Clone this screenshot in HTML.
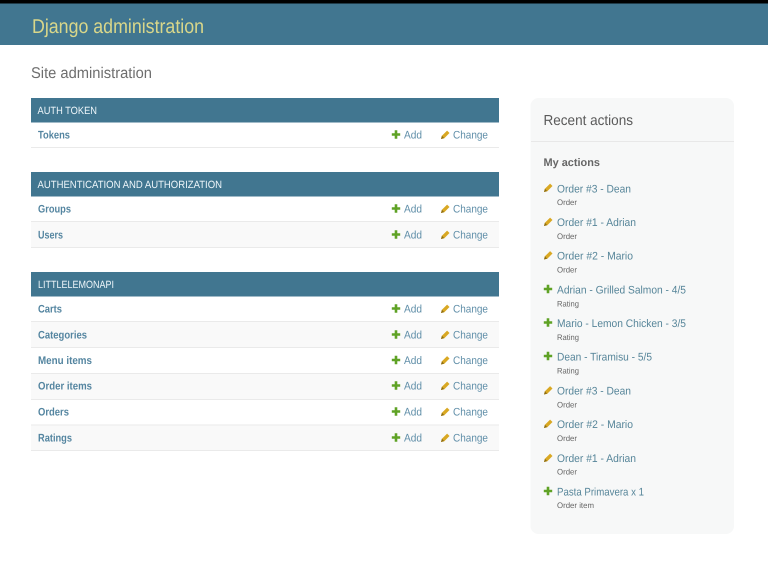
<!DOCTYPE html>
<html lang="en">
<head>
<meta charset="utf-8">
<title>Site administration | Django site admin</title>
<style>
html,body{margin:0;padding:0;background:#fff;width:768px;height:588px;overflow:hidden}
svg{display:block}
text{font-family:"Liberation Sans",Arial,sans-serif;text-rendering:geometricPrecision}
.cap{font-size:10.5px;fill:#eef6fa}
.m{font-size:11px;font-weight:bold;fill:#5485a0;transform:translateY(-.5px)}
.a{font-size:11px;fill:#5f8ea8;transform:translateY(-.5px)}
.t{font-size:11px;fill:#568599;transform:translateY(-.5px)}
.s{font-size:8px;fill:#666}
.p{fill:#5fa225}
.e{fill:#d9a823}
.l{fill:#8c6c12}
</style>
</head>
<body>
<svg width="768" height="588" viewBox="0 0 768 588" xmlns="http://www.w3.org/2000/svg">
<rect width="768" height="588" fill="#fff"/>
<rect width="768" height="45" fill="#417690"/>
<rect width="768" height="3.5" fill="#000"/>
<text x="32" y="33" font-size="20" fill="#d9d78a" textLength="172" lengthAdjust="spacingAndGlyphs">Django administration</text>
<text x="31" y="78" font-size="15.5" fill="#6e6e6e" textLength="121" lengthAdjust="spacingAndGlyphs">Site administration</text>

<!-- Auth token -->
<rect x="31" y="98" width="468" height="24.5" fill="#417690"/>
<text class="cap" x="37.5" y="114" textLength="59.5" lengthAdjust="spacingAndGlyphs">AUTH TOKEN</text>
<rect x="31" y="147" width="468" height="1" fill="#eaeaea"/>
<text class="m" x="38" y="139" textLength="32" lengthAdjust="spacingAndGlyphs">Tokens</text>
<path class="p" transform="translate(396 134.5)" d="M-1.3-4.2h2.6v2.9h2.9v2.6h-2.9v2.9h-2.6v-2.9h-2.9v-2.6h2.9z"/><text class="a" x="404" y="139" textLength="18" lengthAdjust="spacingAndGlyphs">Add</text>
<g transform="translate(445.5 134.5)"><path class="e" d="M-4.5 4.5l.9-3.2 5.2-5.2 2.4 2.4-5.2 5.2z"/><path class="l" d="M-4.5 4.5l.9-3.2 2.3 2.3z"/></g><text class="a" x="453" y="139" textLength="35" lengthAdjust="spacingAndGlyphs">Change</text>

<!-- Authentication and authorization -->
<rect x="31" y="172" width="468" height="24.5" fill="#417690"/>
<text class="cap" x="37.5" y="188" textLength="184.5" lengthAdjust="spacingAndGlyphs">AUTHENTICATION AND AUTHORIZATION</text>
<rect x="31" y="222" width="468" height="25" fill="#f9f9f9"/>
<rect x="31" y="221" width="468" height="1" fill="#eaeaea"/>
<rect x="31" y="247" width="468" height="1" fill="#eaeaea"/>
<text class="m" x="38" y="213" textLength="33" lengthAdjust="spacingAndGlyphs">Groups</text>
<path class="p" transform="translate(396 208.5)" d="M-1.3-4.2h2.6v2.9h2.9v2.6h-2.9v2.9h-2.6v-2.9h-2.9v-2.6h2.9z"/><text class="a" x="404" y="213" textLength="18" lengthAdjust="spacingAndGlyphs">Add</text>
<g transform="translate(445.5 208.5)"><path class="e" d="M-4.5 4.5l.9-3.2 5.2-5.2 2.4 2.4-5.2 5.2z"/><path class="l" d="M-4.5 4.5l.9-3.2 2.3 2.3z"/></g><text class="a" x="453" y="213" textLength="35" lengthAdjust="spacingAndGlyphs">Change</text>
<text class="m" x="38" y="239" textLength="25" lengthAdjust="spacingAndGlyphs">Users</text>
<path class="p" transform="translate(396 234.5)" d="M-1.3-4.2h2.6v2.9h2.9v2.6h-2.9v2.9h-2.6v-2.9h-2.9v-2.6h2.9z"/><text class="a" x="404" y="239" textLength="18" lengthAdjust="spacingAndGlyphs">Add</text>
<g transform="translate(445.5 234.5)"><path class="e" d="M-4.5 4.5l.9-3.2 5.2-5.2 2.4 2.4-5.2 5.2z"/><path class="l" d="M-4.5 4.5l.9-3.2 2.3 2.3z"/></g><text class="a" x="453" y="239" textLength="35" lengthAdjust="spacingAndGlyphs">Change</text>

<!-- Littlelemonapi -->
<rect x="31" y="272" width="468" height="24.5" fill="#417690"/>
<text class="cap" x="38" y="288" textLength="76" lengthAdjust="spacingAndGlyphs">LITTLELEMONAPI</text>
<rect x="31" y="322" width="468" height="25" fill="#f9f9f9"/>
<rect x="31" y="374" width="468" height="25" fill="#f9f9f9"/>
<rect x="31" y="425" width="468" height="25" fill="#f9f9f9"/>
<rect x="31" y="321" width="468" height="1" fill="#eaeaea"/>
<rect x="31" y="347" width="468" height="1" fill="#eaeaea"/>
<rect x="31" y="373" width="468" height="1" fill="#eaeaea"/>
<rect x="31" y="399" width="468" height="1" fill="#eaeaea"/>
<rect x="31" y="424.5" width="468" height="1" fill="#eaeaea"/>
<rect x="31" y="450" width="468" height="1" fill="#eaeaea"/>

<text class="m" x="38" y="313" textLength="24" lengthAdjust="spacingAndGlyphs">Carts</text>
<path class="p" transform="translate(396 308.5)" d="M-1.3-4.2h2.6v2.9h2.9v2.6h-2.9v2.9h-2.6v-2.9h-2.9v-2.6h2.9z"/><text class="a" x="404" y="313" textLength="18" lengthAdjust="spacingAndGlyphs">Add</text>
<g transform="translate(445.5 308.5)"><path class="e" d="M-4.5 4.5l.9-3.2 5.2-5.2 2.4 2.4-5.2 5.2z"/><path class="l" d="M-4.5 4.5l.9-3.2 2.3 2.3z"/></g><text class="a" x="453" y="313" textLength="35" lengthAdjust="spacingAndGlyphs">Change</text>

<text class="m" x="38" y="339" textLength="49" lengthAdjust="spacingAndGlyphs">Categories</text>
<path class="p" transform="translate(396 334.5)" d="M-1.3-4.2h2.6v2.9h2.9v2.6h-2.9v2.9h-2.6v-2.9h-2.9v-2.6h2.9z"/><text class="a" x="404" y="339" textLength="18" lengthAdjust="spacingAndGlyphs">Add</text>
<g transform="translate(445.5 334.5)"><path class="e" d="M-4.5 4.5l.9-3.2 5.2-5.2 2.4 2.4-5.2 5.2z"/><path class="l" d="M-4.5 4.5l.9-3.2 2.3 2.3z"/></g><text class="a" x="453" y="339" textLength="35" lengthAdjust="spacingAndGlyphs">Change</text>

<text class="m" x="38" y="364.5" textLength="54" lengthAdjust="spacingAndGlyphs">Menu items</text>
<path class="p" transform="translate(396 360)" d="M-1.3-4.2h2.6v2.9h2.9v2.6h-2.9v2.9h-2.6v-2.9h-2.9v-2.6h2.9z"/><text class="a" x="404" y="364.5" textLength="18" lengthAdjust="spacingAndGlyphs">Add</text>
<g transform="translate(445.5 360)"><path class="e" d="M-4.5 4.5l.9-3.2 5.2-5.2 2.4 2.4-5.2 5.2z"/><path class="l" d="M-4.5 4.5l.9-3.2 2.3 2.3z"/></g><text class="a" x="453" y="364.5" textLength="35" lengthAdjust="spacingAndGlyphs">Change</text>

<text class="m" x="38" y="390" textLength="54" lengthAdjust="spacingAndGlyphs">Order items</text>
<path class="p" transform="translate(396 385.5)" d="M-1.3-4.2h2.6v2.9h2.9v2.6h-2.9v2.9h-2.6v-2.9h-2.9v-2.6h2.9z"/><text class="a" x="404" y="390" textLength="18" lengthAdjust="spacingAndGlyphs">Add</text>
<g transform="translate(445.5 385.5)"><path class="e" d="M-4.5 4.5l.9-3.2 5.2-5.2 2.4 2.4-5.2 5.2z"/><path class="l" d="M-4.5 4.5l.9-3.2 2.3 2.3z"/></g><text class="a" x="453" y="390" textLength="35" lengthAdjust="spacingAndGlyphs">Change</text>

<text class="m" x="38" y="416" textLength="31" lengthAdjust="spacingAndGlyphs">Orders</text>
<path class="p" transform="translate(396 411.5)" d="M-1.3-4.2h2.6v2.9h2.9v2.6h-2.9v2.9h-2.6v-2.9h-2.9v-2.6h2.9z"/><text class="a" x="404" y="416" textLength="18" lengthAdjust="spacingAndGlyphs">Add</text>
<g transform="translate(445.5 411.5)"><path class="e" d="M-4.5 4.5l.9-3.2 5.2-5.2 2.4 2.4-5.2 5.2z"/><path class="l" d="M-4.5 4.5l.9-3.2 2.3 2.3z"/></g><text class="a" x="453" y="416" textLength="35" lengthAdjust="spacingAndGlyphs">Change</text>

<text class="m" x="38" y="442" textLength="34" lengthAdjust="spacingAndGlyphs">Ratings</text>
<path class="p" transform="translate(396 437.5)" d="M-1.3-4.2h2.6v2.9h2.9v2.6h-2.9v2.9h-2.6v-2.9h-2.9v-2.6h2.9z"/><text class="a" x="404" y="442" textLength="18" lengthAdjust="spacingAndGlyphs">Add</text>
<g transform="translate(445.5 437.5)"><path class="e" d="M-4.5 4.5l.9-3.2 5.2-5.2 2.4 2.4-5.2 5.2z"/><path class="l" d="M-4.5 4.5l.9-3.2 2.3 2.3z"/></g><text class="a" x="453" y="442" textLength="35" lengthAdjust="spacingAndGlyphs">Change</text>

<!-- Sidebar -->
<rect x="530.5" y="98" width="203.5" height="436" rx="8" fill="#f7f8f8"/>
<rect x="531" y="141" width="203" height="1" fill="#e8e8e8"/>
<text x="543.5" y="125" font-size="14.5" fill="#5a5a5a" textLength="89.5" lengthAdjust="spacingAndGlyphs">Recent actions</text>
<text x="543.5" y="166" font-size="11" font-weight="bold" fill="#666" textLength="56.5" lengthAdjust="spacingAndGlyphs">My actions</text>

<g transform="translate(548.5 187.5)"><path class="e" d="M-4.5 4.5l.9-3.2 5.2-5.2 2.4 2.4-5.2 5.2z"/><path class="l" d="M-4.5 4.5l.9-3.2 2.3 2.3z"/></g>
<text class="t" x="557" y="193" textLength="74" lengthAdjust="spacingAndGlyphs">Order #3 - Dean</text>
<text class="s" x="557" y="205" textLength="20" lengthAdjust="spacingAndGlyphs">Order</text>

<g transform="translate(548.5 221.5)"><path class="e" d="M-4.5 4.5l.9-3.2 5.2-5.2 2.4 2.4-5.2 5.2z"/><path class="l" d="M-4.5 4.5l.9-3.2 2.3 2.3z"/></g>
<text class="t" x="557" y="226.5" textLength="79" lengthAdjust="spacingAndGlyphs">Order #1 - Adrian</text>
<text class="s" x="557" y="239" textLength="20" lengthAdjust="spacingAndGlyphs">Order</text>

<g transform="translate(548.5 255)"><path class="e" d="M-4.5 4.5l.9-3.2 5.2-5.2 2.4 2.4-5.2 5.2z"/><path class="l" d="M-4.5 4.5l.9-3.2 2.3 2.3z"/></g>
<text class="t" x="557" y="260" textLength="76" lengthAdjust="spacingAndGlyphs">Order #2 - Mario</text>
<text class="s" x="557" y="272.5" textLength="20" lengthAdjust="spacingAndGlyphs">Order</text>

<path class="p" transform="translate(548 289)" d="M-1.3-4.2h2.6v2.9h2.9v2.6h-2.9v2.9h-2.6v-2.9h-2.9v-2.6h2.9z"/>
<text class="t" x="557" y="294" textLength="129" lengthAdjust="spacingAndGlyphs">Adrian - Grilled Salmon - 4/5</text>
<text class="s" x="557" y="306.5" textLength="22" lengthAdjust="spacingAndGlyphs">Rating</text>

<path class="p" transform="translate(548 322.5)" d="M-1.3-4.2h2.6v2.9h2.9v2.6h-2.9v2.9h-2.6v-2.9h-2.9v-2.6h2.9z"/>
<text class="t" x="557" y="327.5" textLength="129" lengthAdjust="spacingAndGlyphs">Mario - Lemon Chicken - 3/5</text>
<text class="s" x="557" y="340" textLength="22" lengthAdjust="spacingAndGlyphs">Rating</text>

<path class="p" transform="translate(548 356)" d="M-1.3-4.2h2.6v2.9h2.9v2.6h-2.9v2.9h-2.6v-2.9h-2.9v-2.6h2.9z"/>
<text class="t" x="557" y="361" textLength="95" lengthAdjust="spacingAndGlyphs">Dean - Tiramisu - 5/5</text>
<text class="s" x="557" y="373.5" textLength="22" lengthAdjust="spacingAndGlyphs">Rating</text>

<g transform="translate(548.5 390)"><path class="e" d="M-4.5 4.5l.9-3.2 5.2-5.2 2.4 2.4-5.2 5.2z"/><path class="l" d="M-4.5 4.5l.9-3.2 2.3 2.3z"/></g>
<text class="t" x="557" y="395" textLength="74" lengthAdjust="spacingAndGlyphs">Order #3 - Dean</text>
<text class="s" x="557" y="407.5" textLength="20" lengthAdjust="spacingAndGlyphs">Order</text>

<g transform="translate(548.5 423.5)"><path class="e" d="M-4.5 4.5l.9-3.2 5.2-5.2 2.4 2.4-5.2 5.2z"/><path class="l" d="M-4.5 4.5l.9-3.2 2.3 2.3z"/></g>
<text class="t" x="557" y="428.5" textLength="76" lengthAdjust="spacingAndGlyphs">Order #2 - Mario</text>
<text class="s" x="557" y="441" textLength="20" lengthAdjust="spacingAndGlyphs">Order</text>

<g transform="translate(548.5 457.5)"><path class="e" d="M-4.5 4.5l.9-3.2 5.2-5.2 2.4 2.4-5.2 5.2z"/><path class="l" d="M-4.5 4.5l.9-3.2 2.3 2.3z"/></g>
<text class="t" x="557" y="462.5" textLength="79" lengthAdjust="spacingAndGlyphs">Order #1 - Adrian</text>
<text class="s" x="557" y="474.5" textLength="20" lengthAdjust="spacingAndGlyphs">Order</text>

<path class="p" transform="translate(548 491)" d="M-1.3-4.2h2.6v2.9h2.9v2.6h-2.9v2.9h-2.6v-2.9h-2.9v-2.6h2.9z"/>
<text class="t" x="557" y="496" textLength="87" lengthAdjust="spacingAndGlyphs">Pasta Primavera x 1</text>
<text class="s" x="557" y="508" textLength="37" lengthAdjust="spacingAndGlyphs">Order item</text>
</svg>
</body>
</html>
